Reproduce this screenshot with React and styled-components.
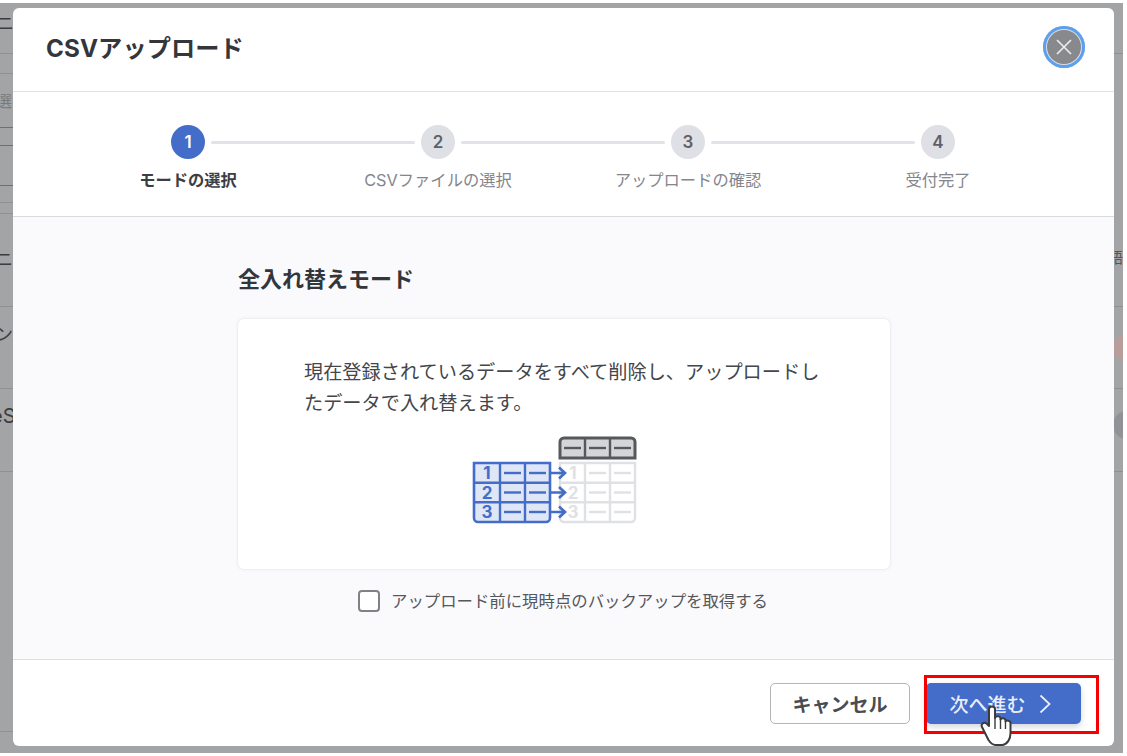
import React from "react";
import styled, { createGlobalStyle } from "styled-components";

const Global = createGlobalStyle`
  html, body { margin: 0; padding: 0; background: #fff; }
  body { font-family: "Inter", "Noto Sans CJK JP", sans-serif; color: #33363b; }
  * { box-sizing: border-box; }
`;
const Page = styled.div`
  width: 1127px; height: 756px; padding: 3px 4px 3px 0; background: #fff; overflow: hidden;
`;
const Backdrop = styled.div`
  position: relative; width: 100%; height: 100%; background: #a3a4a6; padding: 5px 9px 7px 13px; overflow: hidden;
`;
const BackLine = styled.div`
  position: absolute; height: 1px; background: ${p => p.$dark ? "#6f7072" : "#8f9092"};
  left: ${p => p.$right ? "auto" : 0}; right: ${p => p.$right ? 0 : "auto"};
  width: ${p => p.$right ? "10px" : "13px"}; top: ${p => p.$top}px;
`;
const BackText = styled.span`
  position: absolute; top: ${p => p.$top}px; font-size: ${p => p.$size || 18}px; color: ${p => p.$color || "#3c3d40"}; line-height: 1;
  left: ${p => p.$left}px; white-space: nowrap;
`;
const Blob = styled.div`
  position: absolute; width: 28px; height: 28px; border-radius: 50%; right: -18px; top: ${p => p.$top}px; background: ${p => p.$color};
`;
const Modal = styled.div`
  position: relative; height: 100%; background: #fff; border-radius: 6px; display: flex; flex-direction: column; overflow: hidden;
`;
const Header = styled.header`
  height: 84px; flex: none; padding: 0 29px 5px 33px; display: flex; align-items: center; justify-content: space-between; border-bottom: 1px solid #e1e2e6;
`;
const Title = styled.h1`
  margin: 0 0 2px; font-size: 24.2px; font-weight: 700; color: #33363b; letter-spacing: 0.1px;
`;
const CloseButton = styled.button`
  width: 42px; height: 42px; border-radius: 50%; background: #88898d; border: 0; padding: 0;
  color: #fff; display: flex; align-items: center; justify-content: center;
  box-shadow: inset 0 0 0 3px #5a9ff0, inset 0 0 0 4px #dcdde0;
`;
const Steps = styled.ol`
  margin: 0; height: 125px; flex: none; list-style: none; padding: 33px 0 0 50px; display: flex; border-bottom: 1px solid #d9dade;
`;
const Step = styled.li`
  position: relative; width: 250px; display: flex; flex-direction: column; align-items: center;
  &:not(:last-child)::after {
    content: ""; position: absolute; left: 148px; width: 204px; top: 16px; height: 3px; background: #e2e3e8; border-radius: 2px;
  }
`;
const Dot = styled.div`
  width: 34px; height: 34px; border-radius: 50%; display: flex; align-items: center; justify-content: center;
  font-size: 17px; font-weight: 600;
  background: ${p => p.$active ? "#436dc9" : "#dfe0e5"}; color: ${p => p.$active ? "#fff" : "#5f6167"};
`;
const StepLabel = styled.div`
  margin-top: 10px; font-size: 16.3px; line-height: 22px; white-space: nowrap;
  font-weight: ${p => p.$active ? 700 : 400}; color: ${p => p.$active ? "#3b3e44" : "#84868c"};
`;
const Body = styled.main`
  flex: 1; background: #fafafc; padding: 48px 0 0 225px; border-bottom: 1px solid #dedfe3;
`;
const Section = styled.div`width: 652px;`;
const SectionTitle = styled.h2`
  margin: 0 0 26px; font-size: 22px; line-height: 28px; font-weight: 700; color: #33363b;
`;
const Card = styled.div`
  height: 250px; background: #fff; border-radius: 6px; padding: 38px 60px 0 66px;
  box-shadow: 0 0 3px rgba(40,50,70,.16);
  display: flex; flex-direction: column;
`;
const Description = styled.p`
  margin: 0; font-size: 19.2px; line-height: 31px; color: #43464b;
`;
const Illustration = styled.svg`margin: 14px 0 0 167px; flex: none;`;
const CheckRow = styled.label`
  margin-top: 21px; display: flex; align-items: center; justify-content: center; gap: 11px;
  font-size: 16.4px; color: #55575c; line-height: 22px; padding-right: 2px;
`;
const CheckBox = styled.span`
  width: 22px; height: 22px; border: 2px solid #808186; border-radius: 4px; background: #fff; flex: none;
`;
const Footer = styled.footer`
  height: 86px; flex: none; padding: 23px 33px 0 0; display: flex; justify-content: flex-end; gap: 16px;
`;
const BaseButton = styled.button`
  height: 41px; border-radius: 5px; font-family: inherit; font-size: 19px; display: flex; align-items: center; justify-content: center; padding: 0;
`;
const CancelButton = styled(BaseButton)`
  width: 140px; background: #fff; border: 1px solid #b4b5b9; color: #4a4c52; font-weight: 600;
`;
const NextButton = styled(BaseButton)`
  width: 155px; background: #436dc9; border: 0; color: #e8edf9; font-weight: 500; gap: 13px; padding-right: 7px; box-shadow: 0 3px 6px rgba(40,50,80,.2);
`;
const Highlight = styled.div`
  position: absolute; right: 15px; bottom: 12px; width: 175px; height: 59px; border: 3px solid #f50000; pointer-events: none;
`;
const Cursor = styled.svg`
  position: absolute; right: 100px; bottom: 0; z-index: 2;
`;

const steps = ["モードの選択", "CSVファイルの選択", "アップロードの確認", "受付完了"];

function Table() {
  const blue = "#436dc9", grey = "#e0e1e4", dark = "#57585c";
  const rowsY = [40, 59.5, 79];
  const dash = (x, y, c) => <line key={x + "-" + y} x1={x} x2={x + 17} y1={y} y2={y} stroke={c} strokeWidth="2.4" />;
  return (
    <Illustration width="168" height="92" viewBox="0 0 168 92">
      <path d="M89 25V9a4 4 0 0 1 4-4h67a4 4 0 0 1 4 4v16Z" fill="#d4d5d8" stroke={dark} strokeWidth="3" />
      <path d="M114 5v20M139 5v20" stroke={dark} strokeWidth="2.4" />
      {[93, 118, 143].map(x => dash(x, 15, dark))}
      <path d="M89 30h75v55a4 4 0 0 1-4 4H93a4 4 0 0 1-4-4Z M89 49.7h75M89 69.3h75M114 30v59M139 30v59" fill="none" stroke={grey} strokeWidth="2.4" />
      {[118, 143].flatMap(x => rowsY.map(y => dash(x, y, grey)))}
      {["1", "2", "3"].map((n, i) => (
        <text key={n} x="102" y={rowsY[i] + 6} fontSize="17" fontWeight="700" fill={grey} textAnchor="middle" fontFamily="Inter">{n}</text>
      ))}
      <path d="M3 30h76v55a4 4 0 0 1-4 4H7a4 4 0 0 1-4-4Z" fill="#dfe6f6" stroke={blue} strokeWidth="2.6" />
      <path d="M3 49.7h76M3 69.3h76M29 30v59M54 30v59" stroke={blue} strokeWidth="2.4" />
      {rowsY.map(y => [dash(33, y, blue), dash(58, y, blue)])}
      {["1", "2", "3"].map((n, i) => (
        <text key={n} x="16" y={rowsY[i] + 6} fontSize="17" fontWeight="700" fill={blue} textAnchor="middle" fontFamily="Inter">{n}</text>
      ))}
      {rowsY.map(y => (
        <path key={y} d={`M79 ${y}h13M88 ${y - 5.5}l6 5.5-6 5.5`} fill="none" stroke={blue} strokeWidth="2.6" />
      ))}
    </Illustration>
  );
}

export default function App() {
  return (
    <>
      <Global />
      <Page>
        <Backdrop>
          <BackText $top={12} $left={-4}>ニ</BackText>
          <BackText $top={90} $left={-4} $size={16} $color="#77797b">選</BackText>
          <BackText $top={248} $left={-5}>ニ</BackText>
          <BackText $top={323} $left={-5}>ン</BackText>
          <BackText $top={403} $left={-9} $size={20}>eS</BackText>
          <BackText $top={247} $left={1108} $size={15} $color="#55565a">語</BackText>
          {[50, 70, 199, 210, 303, 385, 468, 728].map(t => <BackLine key={t} $top={t} />)}
          {[124, 142, 182].map(t => <BackLine key={t} $dark $top={t} />)}
          {[50, 303, 385, 468].map(t => <BackLine key={t} $right $top={t} />)}
          <Blob $top={331} $color="#b89e9b" />
          <Blob $top={408} $color="#909295" />
          <Modal>
            <Header>
              <Title>CSVアップロード</Title>
              <CloseButton aria-label="閉じる">
                <svg width="18" height="18" viewBox="0 0 18 18"><path d="M2 2l14 14M16 2L2 16" stroke="#eee" strokeWidth="1.6" /></svg>
              </CloseButton>
            </Header>
            <Steps>
              {steps.map((s, i) => (
                <Step key={s}>
                  <Dot $active={i === 0}>{i + 1}</Dot>
                  <StepLabel $active={i === 0}>{s}</StepLabel>
                </Step>
              ))}
            </Steps>
            <Body>
              <Section>
                <SectionTitle>全入れ替えモード</SectionTitle>
                <Card>
                  <Description>現在登録されているデータをすべて削除し、アップロードしたデータで入れ替えます。</Description>
                  <Table />
                </Card>
                <CheckRow><CheckBox />アップロード前に現時点のバックアップを取得する</CheckRow>
              </Section>
            </Body>
            <Footer>
              <CancelButton>キャンセル</CancelButton>
              <NextButton>
                次へ進む
                <svg width="12" height="20" viewBox="0 0 12 20"><path d="M1.5 1.5L10.5 10l-9 8.5" fill="none" stroke="#e8edf9" strokeWidth="1.8" /></svg>
              </NextButton>
            </Footer>
            <Highlight />
            <Cursor width="34" height="41" viewBox="0 0 34 41">
              <path d="M9 4c0-3.5 6-3.5 6 0v9c1-2.5 5.5-2 5.5.5v1c1-2 5-1.5 5 1v1c1-1.5 5-1 5 1.5V28c0 6-3 11-8 12h-7c-3 0-5-2-7-5L2 22c-1.500-3 2-5.500 4.500-3.500L9 21Z" fill="#fff" stroke="#3c3c3e" strokeWidth="2" strokeLinejoin="round" />
              <path d="M15 13v11M20.500 14v10M25.500 16v8" stroke="#3c3c3e" strokeWidth="1.400" fill="none" />
            </Cursor>
          </Modal>
        </Backdrop>
      </Page>
    </>
  );
}
